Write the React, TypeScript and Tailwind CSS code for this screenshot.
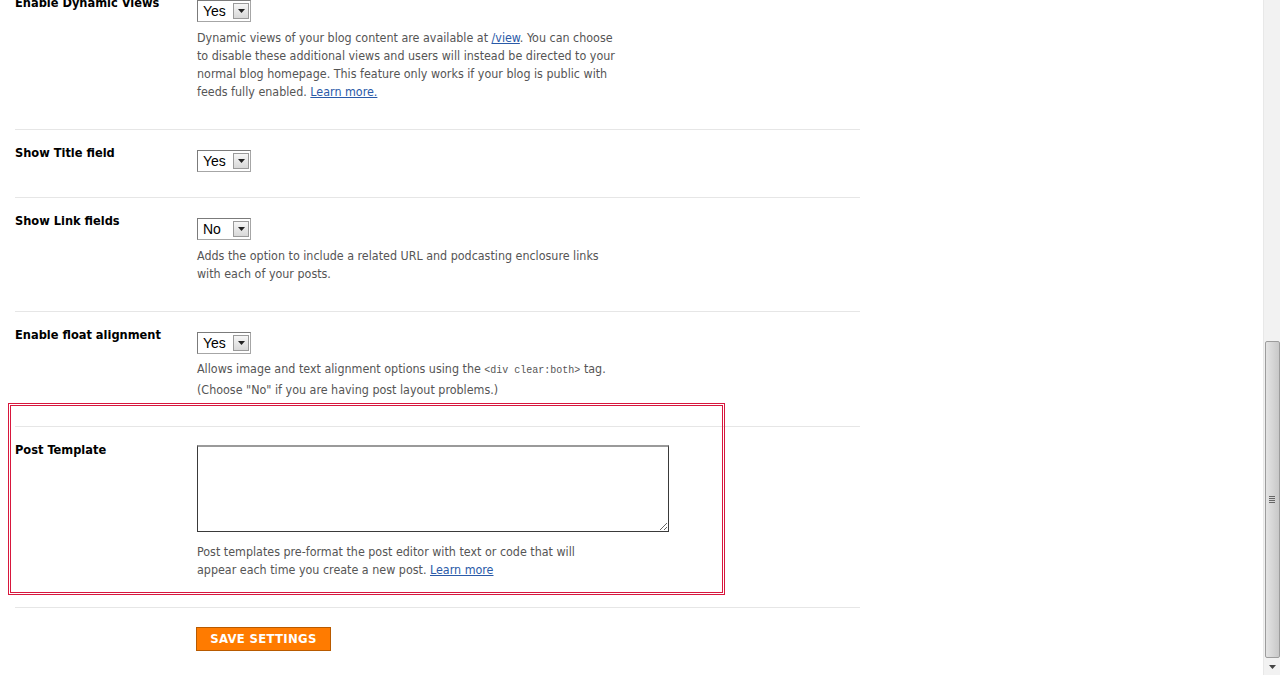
const body = "font-['DejaVu_Sans_Condensed','DejaVu_Sans',sans-serif]";

const Select = ({ value }: { value: string }) => (
  <div className="flex h-[22px] w-[54px] items-center justify-between border border-[#7b7b7b] border-r-[#a6a6a6] border-b-[#a6a6a6] bg-white pr-[1px]">
    <span className="pl-[5px] font-['Liberation_Sans',Arial,sans-serif] text-[14px] leading-none text-black">{value}</span>
    <span className="flex h-[16px] w-[16px] items-center justify-center border border-[#9a9a9a] bg-linear-to-b from-[#f6f6f6] to-[#d8d8d8]">
      <svg width="7" height="4" viewBox="0 0 7 4">
        <path d="M0 0h7L3.5 4z" fill="#222" />
      </svg>
    </span>
  </div>
);

const Link = ({ children }: { children: React.ReactNode }) => (
  <a href="#" className="text-[#2a5aa8] underline">{children}</a>
);

const Desc = ({ children, lead = 'leading-[18px]' }: { children: React.ReactNode; lead?: string }) => (
  <p className={`${body} text-[12.4px] ${lead} whitespace-nowrap text-[#555]`}>{children}</p>
);

const Row = ({ label, children }: { label: string; children: React.ReactNode }) => (
  <div className="flex border-b border-[#e6e6e6] pt-[14px]">
    <div className={`${body} w-[182px] shrink-0 text-[12.7px] font-bold leading-[18px] text-black`}>{label}</div>
    <div className="flex flex-col">{children}</div>
  </div>
);

const Scrollbar = () => (
  <div className="flex h-[675px] w-[17px] shrink-0 flex-col border-l border-[#e8e8e8] bg-[#f2f2f2]">
    <div className="h-[341px]" />
    <div className="mx-auto flex h-[317px] w-[15px] items-center justify-center rounded-[2px] border border-[#9c9c9c] bg-linear-to-r from-[#e4e4e4] via-[#d6d6d6] to-[#c8c8c8]">
      <div className="flex flex-col gap-[1px]">
        <span className="h-[1px] w-[6px] bg-[#666]" />
        <span className="h-[1px] w-[6px] bg-[#666]" />
        <span className="h-[1px] w-[6px] bg-[#666]" />
        <span className="h-[1px] w-[6px] bg-[#666]" />
      </div>
    </div>
    <div className="flex flex-1 items-center justify-center">
      <svg width="7" height="4" viewBox="0 0 7 4">
        <path d="M0 0h7L3.5 4z" fill="#444" />
      </svg>
    </div>
  </div>
);

export default function App() {
  return (
    <div className="flex h-[675px] w-[1280px] overflow-hidden bg-white">
      <div className="flex-1">
        <div className="-mt-[20px] ml-[15px] w-[845px]">
          <Row label="Enable Dynamic Views">
            <div className="flex pt-[6px]"><Select value="Yes" /></div>
            <div className="mt-[7px] pb-[28px]">
              <Desc>
                Dynamic views of your blog content are available at <Link>/view</Link>. You can choose<br />
                to disable these additional views and users will instead be directed to your<br />
                normal blog homepage. This feature only works if your blog is public with<br />
                feeds fully enabled. <Link>Learn more.</Link>
              </Desc>
            </div>
          </Row>
          <Row label="Show Title field">
            <div className="flex pt-[6px] pb-[25px]"><Select value="Yes" /></div>
          </Row>
          <Row label="Show Link fields">
            <div className="flex pt-[6px]"><Select value="No" /></div>
            <div className="mt-[7px] pb-[28px]">
              <Desc>
                Adds the option to include a related URL and podcasting enclosure links<br />
                with each of your posts.
              </Desc>
            </div>
          </Row>
          <Row label="Enable float alignment">
            <div className="flex pt-[6px]"><Select value="Yes" /></div>
            <div className="mt-[5px] pb-[27px]">
              <Desc lead="leading-[19px]">
                Allows image and text alignment options using the{' '}
                <code className="font-['Liberation_Mono','Courier_New',monospace] text-[10px]">&lt;div clear:both&gt;</code> tag.<br />
                (Choose "No" if you are having post layout problems.)
              </Desc>
            </div>
          </Row>
          <div className="relative">
            <div className="pointer-events-none absolute -top-[24px] -left-[7px] h-[192px] w-[717px] border-[3px] border-double border-[#d8173d]" />
            <Row label="Post Template">
              <div className="flex pt-[4px]">
                <textarea className="block h-[87px] w-[472px] resize border border-[#3a3a3a] border-t-2 border-t-[#9a9a9a] bg-white" />
              </div>
              <div className="mt-[11px] pb-[28px]">
                <Desc>
                  Post templates pre-format the post editor with text or code that will<br />
                  appear each time you create a new post. <Link>Learn more</Link>
                </Desc>
              </div>
            </Row>
          </div>
          <div className="flex pt-[19px]">
            <div className="w-[181px] shrink-0" />
            <button className={`${body} h-[24px] w-[135px] border border-[#b85a00] bg-[#ff7b00] text-[13px] font-bold tracking-[0.3px] text-white`}>
              SAVE SETTINGS
            </button>
          </div>
        </div>
      </div>
      <Scrollbar />
    </div>
  );
}
